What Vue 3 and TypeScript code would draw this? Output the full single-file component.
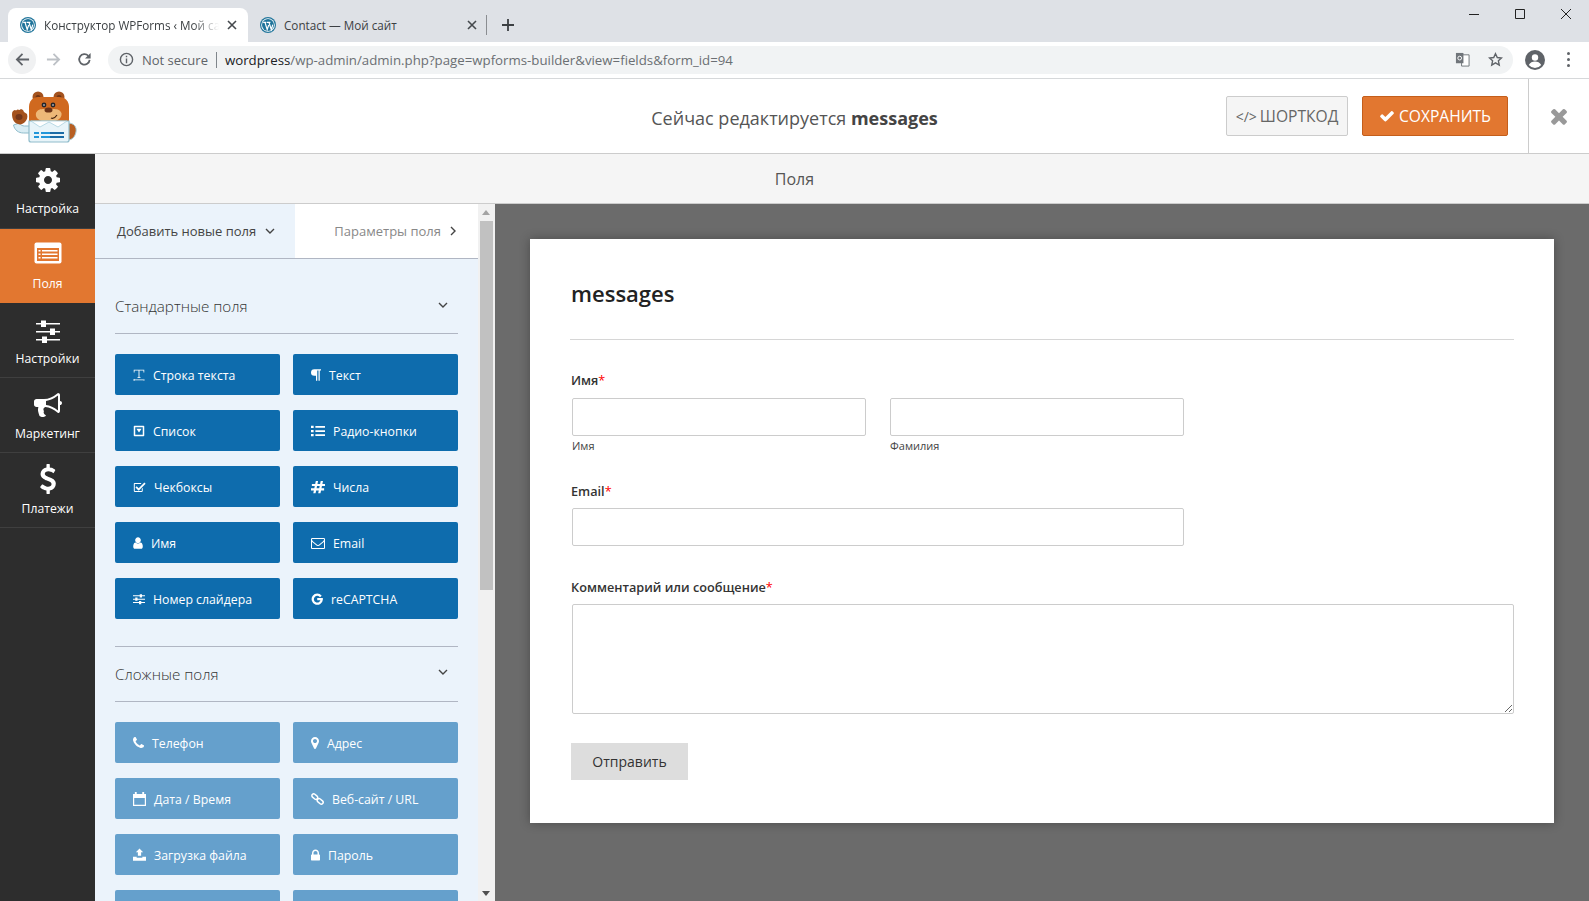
<template>
  <div class="page">
    <!-- browser chrome -->
    <div class="tabstrip">
      <div class="tab active">
        <svg class="favicon" viewBox="0 0 16 16" v-html="icons.wp"></svg>
        <span class="tab-title">Конструктор WPForms ‹ Мой сайт</span>
        <svg class="tab-close" viewBox="0 0 10 10"><path d="M1 1l8 8M9 1l-8 8" /></svg>
      </div>
      <div class="tab">
        <svg class="favicon" viewBox="0 0 16 16" v-html="icons.wp"></svg>
        <span class="tab-title">Contact — Мой сайт</span>
        <svg class="tab-close" viewBox="0 0 10 10"><path d="M1 1l8 8M9 1l-8 8" /></svg>
      </div>
      <div class="tab-sep"></div>
      <svg class="new-tab" viewBox="0 0 12 12"><path d="M6 0v12M0 6h12" /></svg>
      <div class="window-btns">
        <svg viewBox="0 0 12 12"><path d="M1 6.5h10" /></svg>
        <svg viewBox="0 0 12 12"><path d="M1.5 1.5h9v9h-9z" /></svg>
        <svg viewBox="0 0 12 12"><path d="M1 1l10 10M11 1L1 11" /></svg>
      </div>
    </div>
    <div class="toolbar">
      <div class="nav-btn back">
        <svg viewBox="0 0 16 16"><path d="M15 8H2M8 2L2 8l6 6" /></svg>
      </div>
      <div class="nav-btn fwd">
        <svg viewBox="0 0 16 16"><path d="M1 8h13M8 2l6 6-6 6" /></svg>
      </div>
      <div class="nav-btn">
        <svg viewBox="0 0 16 16"><path d="M13.5 8.5A5.6 5.6 0 1 1 12 4" /><path class="solid" d="M14.5 1v6h-6z" /></svg>
      </div>
      <div class="omnibox">
        <svg class="info" viewBox="0 0 16 16">
          <circle cx="8" cy="8" r="6.5" />
          <path d="M8 7v5M8 4v1.6" />
        </svg>
        <span class="not-secure">Not secure</span>
        <span class="omni-sep"></span>
        <span class="url"><b>wordpress</b>/wp-admin/admin.php?page=wpforms-builder&amp;view=fields&amp;form_id=94</span>
        <span class="omni-right">
          <svg class="translate" viewBox="0 0 16 16">
            <path class="t-back" d="M7 3h8v12H7z" />
            <path class="t-front" d="M1 1h8v11H1z" />
            <circle class="t-g" cx="5" cy="6.5" r="2" />
          </svg>
          <svg class="star" viewBox="0 0 16 16"><path d="M8 1.8l1.9 4.1 4.5.5-3.3 3 .9 4.5L8 11.6l-4 2.3.9-4.5-3.3-3 4.5-.5z" /></svg>
        </span>
      </div>
      <svg class="avatar" viewBox="0 0 20 20">
        <circle cx="10" cy="10" r="10" fill="#5f6368" />
        <circle cx="10" cy="7.5" r="3.2" fill="#fff" />
        <path d="M3.8 15c1.3-2.6 3.6-3.6 6.2-3.6s4.9 1 6.2 3.6a8 8 0 0 1-12.4 0z" fill="#fff" />
      </svg>
      <div class="kebab"><i></i><i></i><i></i></div>
    </div>

    <!-- builder top bar -->
    <header class="top">
      <svg class="bear" viewBox="0 78 100 70">
        <!-- tail -->
        <path d="M68 122c6 0 9 4 8 9-1 5-4 8-8 8z" fill="#b85f22" stroke="#a9d0de" stroke-width="1" />
        <!-- sleeve and paw -->
        <path d="M13.500 124c1 5 5 8 10 8h7v-7h-6c-2 0-4-1-5-3z" fill="#d9edf4" stroke="#8fbccb" stroke-width="1" />
        <path d="M12 113c0-3 2-4 3-4l1 .5 1.500-1 2 .5 1.500-1 2 1 1 2 3 2c1 3 0 6-2 8-2 2-5 3-7 2-4-1-6-5-6-10z" fill="#a4521d" />
        <ellipse cx="19" cy="116" rx="3.500" ry="3" fill="#74371a" />
        <!-- ears and head -->
        <circle cx="38" cy="96" r="5.500" fill="#a4521d" />
        <circle cx="59" cy="96" r="5.500" fill="#a4521d" />
        <circle cx="38" cy="96.500" r="2.500" fill="#6f3515" />
        <circle cx="59" cy="96.500" r="2.500" fill="#6f3515" />
        <path d="M29 106c0-6 4-10 9-10h21c6 0 10 4 10 10v18H29z" fill="#d0691f" />
        <path d="M36 112c2-5 7-4 12.500-4s11-1 13 4c1 6-6 9-13 9s-14-3-12.500-9z" fill="#edb878" />
        <ellipse cx="48.500" cy="109" rx="4" ry="2.600" fill="#6b3216" />
        <circle cx="44" cy="104" r="2.400" fill="#22252b" />
        <circle cx="53" cy="104" r="2.400" fill="#22252b" />
        <circle cx="44" cy="104" r="0.800" fill="#fff" />
        <circle cx="53" cy="104" r="0.800" fill="#fff" />
        <path d="M51 117c2 1 4 0 6-3" fill="none" stroke="#43220f" stroke-width="1.200" />
        <!-- shirt -->
        <path d="M29 120h40v19a2 2 0 0 1-2 2H31a2 2 0 0 1-2-2z" fill="#e8f4f9" stroke="#8fbccb" stroke-width="1.200" />
        <path d="M31 120l9 6 9-5 9 5 9-6z" fill="#fff" stroke="#a9d0de" stroke-width="0.800" />
        <path d="M34 131h5v2h-5zM34 135h5v2h-5zM41 131h23v2H41zM41 135h23v2H41z" fill="#2196d9" />
        <path d="M50 131h14v2H50zM50 135h14v2H50z" fill="#1a6ba6" />
      </svg>
      <div class="top-title">Сейчас редактируется <strong>messages</strong></div>
      <div class="top-actions">
        <button class="btn-code"><span class="code-mark">&lt;/&gt;</span> ШОРТКОД</button>
        <button class="btn-save">
          <svg viewBox="0 0 1792 1792" v-html="icons.check"></svg>
          СОХРАНИТЬ
        </button>
      </div>
      <div class="top-close">
        <svg viewBox="0 0 1792 1792" v-html="icons.times"></svg>
      </div>
    </header>

    <div class="body">
      <nav class="side">
        <div
          v-for="item in sideItems"
          :key="item.label + item.icon"
          class="side-item"
          :class="{ active: item.active }"
        >
          <svg :viewBox="item.box" :style="{ width: item.size + 'px', height: item.size + 'px' }" v-html="icons[item.icon]"></svg>
          <span>{{ item.label }}</span>
        </div>
      </nav>

      <div class="main">
        <div class="subhead">Поля</div>
        <div class="workspace">
          <aside class="panel">
            <div class="panel-tabs">
              <div class="ptab current">
                Добавить новые поля
                <svg class="chev" viewBox="0 0 10 6"><path d="M1 1l4 4 4-4" /></svg>
              </div>
              <div class="ptab other">
                Параметры поля
                <svg class="chev" viewBox="0 0 6 10"><path d="M1 1l4 4-4 4" /></svg>
              </div>
            </div>
            <section v-for="group in groups" :key="group.title" class="group" :class="group.cls">
              <div class="group-head">
                <span>{{ group.title }}</span>
                <svg class="chev" viewBox="0 0 10 6"><path d="M1 1l4 4 4-4" /></svg>
              </div>
              <div class="group-grid">
                <div v-for="(field, i) in group.fields" :key="i" class="field-btn">
                  <svg
                    :viewBox="field.box"
                    :style="{ width: field.w + 'px' }"
                    v-html="icons[field.icon]"
                  ></svg>
                  <span>{{ field.label }}</span>
                </div>
              </div>
            </section>
          </aside>
          <div class="scrollbar">
            <span class="arrow up"></span>
            <span class="thumb"></span>
            <span class="arrow down"></span>
          </div>
          <div class="preview">
            <div class="card">
              <h2 class="form-title">messages</h2>
              <div class="form-rule"></div>
              <label class="lbl">Имя<em>*</em></label>
              <div class="name-row">
                <div>
                  <div class="inp"></div>
                  <div class="sub">Имя</div>
                </div>
                <div>
                  <div class="inp"></div>
                  <div class="sub">Фамилия</div>
                </div>
              </div>
              <label class="lbl email-lbl">Email<em>*</em></label>
              <div class="inp email"></div>
              <label class="lbl msg-lbl">Комментарий или сообщение<em>*</em></label>
              <div class="inp area">
                <svg class="grip" viewBox="0 0 10 10"><path d="M9 2L2 9M9 6L6 9" /></svg>
              </div>
              <button class="send">Отправить</button>
            </div>
          </div>
        </div>
      </div>
    </div>
  </div>
</template>

<script setup lang="ts">
interface FieldBtn {
  label: string
  icon: string
  w: number
  box: string
}

const FA = '0 0 1792 1792'
const SM = '0 0 16 16'

const icons: Record<string, string> = {
  wp: '<circle cx="8" cy="8" r="8" fill="#21759b"/><circle cx="8" cy="8" r="6.800" fill="#fff"/><circle cx="8" cy="8" r="6" fill="#21759b"/><path d="M3.200 5.400h3.200M5 5.400l2.200 7.200 1.500-4.600M7 5.400h3.400M9 5.400l2.300 7.200 1.500-5" fill="none" stroke="#fff" stroke-width="1.200"/>',
  check: '<path d="M1671 566q0 40-28 68l-724 724-136 136q-28 28-68 28t-68-28l-136-136-362-362q-28-28-28-68t28-68l136-136q28-28 68-28t68 28l294 295 656-657q28-28 68-28t68 28l136 136q28 28 28 68z"/>',
  times: '<path d="M1490 1322q0 40-28 68l-136 136q-28 28-68 28t-68-28l-294-294-294 294q-28 28-68 28t-68-28l-136-136q-28-28-28-68t28-68l294-294-294-294q-28-28-28-68t28-68l136-136q28-28 68-28t68 28l294 294 294-294q28-28 68-28t68 28l136 136q28 28 28 68t-28 68l-294 294 294 294q28 28 28 68z"/>',
  cog: '<path d="M1152 896q0-106-75-181t-181-75-181 75-75 181 75 181 181 75 181-75 75-181zm512-109v222q0 12-8 23t-20 13l-185 28q-19 54-39 91 35 50 107 138 10 12 10 25t-9 23q-27 37-99 108t-94 71q-12 0-26-9l-138-108q-44 23-91 38-16 136-29 186-7 28-36 28h-222q-14 0-24.500-8.500t-11.500-21.500l-28-184q-49-16-90-37l-141 107q-10 9-25 9-14 0-25-11-126-114-165-168-7-10-7-23 0-12 8-23 15-21 51-66.500t54-70.500q-27-50-41-99l-183-27q-13-2-21-12.500t-8-23.500v-222q0-12 8-23t19-13l186-28q14-46 39-92-40-57-107-138-10-12-10-24 0-10 9-23 26-36 98.500-107.500t94.500-71.500q13 0 26 10l138 107q44-23 91-38 16-136 29-186 7-28 36-28h222q14 0 24.500 8.500t11.500 21.500l28 184q49 16 90 37l142-107q9-9 24-9 13 0 25 10 129 119 165 170 7 8 7 22 0 12-8 23-15 21-51 66.500t-54 70.500q26 50 41 98l183 28q13 2 21 12.500t8 23.500z"/>',
  form: '<rect x="0.500" y="0.500" width="27" height="21" rx="2"/><rect x="3" y="6" width="22" height="13" fill="var(--ico-bg)"/><path d="M4.500 8h2v1.500h-2zM8 8h15.500v1.500H8zM4.500 11.500h2V13h-2zM8 11.500h15.500V13H8zM4.500 15h2v1.500h-2zM8 15h15.500v1.500H8z"/>',
  sliders: '<path d="M0 2.500h24v1.600H0zM0 10.500h24v1.600H0zM0 18.500h24v1.600H0z"/><path d="M5 0h5v6.500H5zM14 8h5v6.500h-5zM6 16h5v6.500H6z"/>',
  bullhorn: '<path d="M1664 640q53 0 90.500 37.500t37.500 90.500-37.500 90.500-90.500 37.500v384q0 52-38 90t-90 38q-417-347-812-380-58 19-91 66t-31 100.500 40 92.500q-20 33-23 65.500t6 58 33.500 55 48 50 61.500 50.500q-29 58-111.500 83t-168.500 11.500-132-55.500q-7-23-29.500-87.500t-32-94.500-23-89-15-101 3.500-98.500 22-110.500h-122q-66 0-113-47t-47-113v-192q0-66 47-113t113-47h480q435 0 896-384 52 0 90 38t38 90v384zm-128 604v-954q-394 302-768 343v270q377 42 768 341z"/>',
  usd: '<path d="M1362 1185q0 153-99.500 263.500t-258.500 136.500v175q0 14-9 23t-23 9h-135q-13 0-22.500-9.500t-9.500-22.500v-175q-66-9-127.500-31t-101.500-44.500-74-48-46.500-37.500-17.500-18q-17-21-2-41l103-135q7-10 23-12 15-2 24 9l2 2q113 99 243 125 37 8 74 8 81 0 142.500-43t61.500-122q0-28-15-53t-33.500-42-58.500-37.500-66-32-80-32.500q-39-16-61.500-25t-61.500-26.500-62.500-31-56.500-35.500-53.500-42.500-43.500-49-35.500-58-21-66.500-8.500-78q0-138 98-242t255-134v-180q0-13 9.500-22.500t22.500-9.500h135q14 0 23 9t9 23v176q57 6 110.500 23t87 33.500 63.500 37.500 39 29 15 14q17 18 5 38l-81 146q-8 15-23 16-14 3-27-7-3-3-14.500-12t-39-26.500-58.500-32-74.500-26-85.500-11.500q-95 0-155 43t-60 111q0 26 8.500 48t29.500 41.500 39.500 33 56 31 60.500 27 70 27.500q53 20 81 31.500t76 35 75.500 42.500 62 50 53 63.500 31.500 76.500 13 94z"/>',
  textline: '<path d="M1 1h14v3.500h-1V2H8.600v9H10v1H6v-1h1.400V2H2v2.500H1zM1 14h14v1H1zM0 14.500L2 13v3zM16 14.500L14 13v3z"/>',
  para: '<path d="M7 1h8v1.500h-1.500V15H12V2.500h-1.500V15H9V9H7a4 4 0 0 1 0-8z"/>',
  select: '<path fill-rule="evenodd" d="M2 1h12a1 1 0 0 1 1 1v12a1 1 0 0 1-1 1H2a1 1 0 0 1-1-1V2a1 1 0 0 1 1-1zm1 2v10h10V3zm1.500 2h7L8 10z"/>',
  checkbox: '<path d="M12 8.800V13a1 1 0 0 1-1 1H2a1 1 0 0 1-1-1V4a1 1 0 0 1 1-1h8v1.200H2.200v8.600h8.600V10z"/><path d="M4.500 7L7 9.500 14 2.500l1.500 1.500L7 12.500 3 8.500z"/>',
  list: '<path d="M0 2h3v2.500H0zM0 6.800h3v2.500H0zM0 11.500h3V14H0zM5 2.300h11v2H5zM5 7h11v2H5zM5 11.800h11v2H5z"/>',
  hash: '<path d="M5.500 1h2.600L7.400 4.500h3L11.100 1h2.600L13 4.500h3v2.400h-3.500l-.5 2.600h3v2.400h-3.500L10.800 15H8.200l.7-3.100h-3L5.200 15H2.600l.7-3.100H0V9.500h3.800l.5-2.600H1V4.500h3.800zM6.900 6.900l-.5 2.600h3l.5-2.600z"/>',
  user: '<path d="M1536 1399q0 109-62.500 187t-150.500 78h-854q-88 0-150.500-78t-62.500-187q0-85 8.500-160.500t31.500-152 58.500-131 94-89 134.500-34.500q131 128 313 128t313-128q76 0 134.500 34.500t94 89 58.500 131 31.500 152 8.500 160.500zm-256-887q0 159-112.500 271.500t-271.500 112.500-271.500-112.500-112.500-271.500 112.500-271.500 271.500-112.500 271.500 112.500 112.500 271.500z"/>',
  mail: '<path d="M1664 1504v-768q-32 36-69 66-268 206-426 338-51 43-83 67t-86.500 48.500-102.500 24.500h-2q-48 0-102.500-24.500t-86.500-48.500-83-67q-158-132-426-338-37-30-69-66v768q0 13 9.500 22.500t22.500 9.500h1472q13 0 22.500-9.500t9.500-22.500zm0-1051v-24.500l-.5-13-3-12.500-5.500-9-9-7.500-14-2.500h-1472q-13 0-22.500 9.500t-9.500 22.500q0 168 147 284 193 152 401 317 6 5 35 29.500t46 37.500 44.500 31.500 50.500 27.500 43 9h2q20 0 43-9t50.500-27.500 44.500-31.500 46-37.500 35-29.500q208-165 401-317 54-43 100.500-115.500t46.500-131.500zm128-37v1088q0 66-47 113t-113 47h-1472q-66 0-113-47t-47-113v-1088q0-66 47-113t113-47h1472q66 0 113 47t47 113z"/>',
  tune: '<path d="M0 3h16v1.400H0zM0 7.500h16v1.400H0zM0 12h16v1.400H0z"/><path d="M9 1.500h3v4.400H9zM3 6h3v4.400H3zM8 10.500h3v4.400H8z"/>',
  google: '<path d="M14.300 3.700A7.500 7.500 0 1 0 15.800 8.900V6.800H8.300v3h4.300A4.500 4.500 0 1 1 12 5.600z"/>',
  phone: '<path d="M1600 1240q0 27-10 70.500t-21 68.500q-21 50-122 106-94 51-186 51-27 0-53-3.500t-57.500-12.500-47-14.500-55.500-20.500-49-18q-98-35-175-83-127-79-264-216t-216-264q-48-77-83-175-3-9-18-49t-20.500-55.500-14.500-47-12.500-57.500-3.500-53q0-92 51-186 56-101 106-122 25-11 68.500-21t70.500-10q14 0 21 3 18 6 53 76 11 19 30 54t35 63.500 31 53.500q3 4 17.500 25t21.500 35.500 7 28.500q0 20-28.500 50t-62 55-62 53-28.500 46q0 9 5 22.500t8.500 20.500 14 24 11.500 19q76 137 174 235t235 174q2 1 19 11.500t24 14 20.500 8.500 22.500 5q18 0 46-28.500t53-62 55-62 50-28.500q14 0 28.500 7t35.500 21.500 25 17.500q25 15 53.500 31t63.500 35 54 30q70 35 76 53 3 7 3 21z"/>',
  marker: '<path d="M1152 640q0-106-75-181t-181-75-181 75-75 181 75 181 181 75 181-75 75-181zm256 0q0 109-33 179l-364 774q-16 33-47.500 52t-67.500 19-67.500-19-46.500-52l-365-774q-33-70-33-179 0-212 150-362t362-150 362 150 150 362z"/>',
  calendar: '<path fill-rule="evenodd" d="M1 3h2V1h2v2h6V1h2v2h2v13H1zm1.300 4.500v7.200h11.400V7.500z"/>',
  link: '<g fill="none" stroke="#fff" stroke-width="1.800"><rect x="0.800" y="3" width="8" height="4.500" rx="2.200" transform="rotate(40 5 5)"/><rect x="7.200" y="8.500" width="8" height="4.500" rx="2.200" transform="rotate(40 11 11)"/></g>',
  upload: '<path d="M8 0l4.500 4.500H10V9H6V4.500H3.500zM0 10h4.500v1.500h7V10H16v5H0z"/>',
  lock: '<path d="M640 768h512v-192q0-106-75-181t-181-75-181 75-75 181v192zm832 96v576q0 40-28 68t-68 28h-960q-40 0-68-28t-28-68v-576q0-40 28-68t68-28h32v-192q0-184 132-316t316-132 316 132 132 316v192h32q40 0 68 28t28 68z"/>',
  blank: ''
}

const sideItems = [
  { label: 'Настройка', icon: 'cog', box: FA, size: 28, active: false },
  { label: 'Поля', icon: 'form', box: '0 0 28 22', size: 28, active: true },
  { label: 'Настройки', icon: 'sliders', box: '0 0 24 23', size: 24, active: false },
  { label: 'Маркетинг', icon: 'bullhorn', box: FA, size: 28, active: false },
  { label: 'Платежи', icon: 'usd', box: FA, size: 30, active: false }
]

const fld = (label: string, icon: string, w: number, box: string = SM): FieldBtn => ({ label, icon, w, box })

const groups = [
  {
    title: 'Стандартные поля',
    cls: 'first',
    fields: [
      fld('Строка текста', 'textline', 12),
      fld('Текст', 'para', 10, '3 1 12 14'),
      fld('Список', 'select', 12),
      fld('Радио-кнопки', 'list', 14),
      fld('Чекбоксы', 'checkbox', 13),
      fld('Числа', 'hash', 14),
      fld('Имя', 'user', 10, '224 220 1344 1344'),
      fld('Email', 'mail', 14, FA),
      fld('Номер слайдера', 'tune', 12),
      fld('reCAPTCHA', 'google', 12)
    ]
  },
  {
    title: 'Сложные поля',
    cls: 'second',
    fields: [
      fld('Телефон', 'phone', 11, '192 192 1408 1408'),
      fld('Адрес', 'marker', 8, '384 128 1024 1536'),
      fld('Дата / Время', 'calendar', 13, '1 1 14 15'),
      fld('Веб-сайт / URL', 'link', 13),
      fld('Загрузка файла', 'upload', 13),
      fld('Пароль', 'lock', 9, '320 128 1152 1408'),
      // the last row runs off the bottom of the window
      fld('', 'blank', 13),
      fld('', 'blank', 13)
    ]
  }
]
</script>

<style>
html,
body {
  margin: 0;
  height: 100%;
  overflow: hidden;
}
</style>

<style scoped>
.page {
  width: 1589px;
  height: 901px;
  display: flex;
  flex-direction: column;
  overflow: hidden;
  background: #fff;
  font-family: "Open Sans", "Noto Sans", sans-serif;
  color: #444;
}

/* browser chrome */
.tabstrip {
  height: 42px;
  flex: none;
  background: #dee1e6;
  display: flex;
  align-items: flex-end;
  padding-left: 8px;
  box-sizing: border-box;
}
.tab {
  width: 240px;
  height: 34px;
  display: flex;
  align-items: center;
  padding: 0 11px 0 12px;
  box-sizing: border-box;
  font-size: 11.7px;
  color: #3c4043;
  border-radius: 8px 8px 0 0;
}
.tab.active {
  background: #fff;
}
.favicon {
  width: 16px;
  height: 16px;
  flex: none;
  margin-right: 8px;
}
.tab-title {
  flex: 1;
  white-space: nowrap;
  overflow: hidden;
  min-width: 0;
}
.tab.active .tab-title {
  -webkit-mask-image: linear-gradient(90deg, #000 85%, transparent);
  mask-image: linear-gradient(90deg, #000 85%, transparent);
}
.tab-close {
  width: 10px;
  height: 10px;
  flex: none;
  margin-left: 8px;
  fill: none;
  stroke: #45494d;
  stroke-width: 1.6;
}
.tab-sep {
  width: 1px;
  height: 20px;
  background: #8a8d91;
  margin: 0 0 7px -2px;
}
.new-tab {
  width: 12px;
  height: 12px;
  margin: 0 0 11px 15px;
  fill: none;
  stroke: #3c4043;
  stroke-width: 1.8;
}
.window-btns {
  margin-left: auto;
  align-self: flex-start;
  display: flex;
  gap: 34px;
  padding: 8px 17px 0 0;
}
.window-btns svg {
  width: 12px;
  height: 12px;
  fill: none;
  stroke: #222;
  stroke-width: 1;
}
.toolbar {
  height: 37px;
  flex: none;
  box-sizing: border-box;
  border-bottom: 1px solid #d6d8da;
  display: flex;
  align-items: center;
  padding: 0 0 1px 8px;
}
.nav-btn {
  width: 28px;
  height: 28px;
  border-radius: 50%;
  display: flex;
  align-items: center;
  justify-content: center;
  margin-right: 3px;
}
.nav-btn.back {
  background: #f0f1f2;
}
.nav-btn svg {
  width: 15px;
  height: 15px;
  fill: none;
  stroke: #5f6368;
  stroke-width: 1.9;
}
.nav-btn .solid {
  fill: #5f6368;
  stroke: none;
}
.nav-btn.fwd svg {
  stroke: #bdc1c6;
}
.omnibox {
  width: 1405px;
  height: 28px;
  margin-left: 7px;
  border-radius: 14px;
  background: #f1f3f4;
  display: flex;
  align-items: center;
  padding-left: 11px;
  box-sizing: border-box;
  font-size: 13px;
  white-space: nowrap;
}
.info {
  width: 15px;
  height: 15px;
  fill: none;
  stroke: #5f6368;
  stroke-width: 1.5;
  margin-right: 8px;
}
.not-secure {
  color: #5f6368;
}
.omni-sep {
  width: 1px;
  height: 16px;
  background: #80868b;
  margin: 0 8px 0 8px;
}
.url {
  color: #6b6f73;
  font-size: 13.26px;
}
.url b {
  font-weight: 400;
  color: #202124;
}
.omni-right {
  margin-left: auto;
  display: flex;
  align-items: center;
  gap: 18px;
  padding-right: 10px;
}
.translate {
  width: 15px;
  height: 15px;
}
.t-back {
  fill: #fff;
  stroke: #70757a;
}
.t-front {
  fill: #70757a;
}
.t-g {
  fill: none;
  stroke: #fff;
}
.star {
  width: 15px;
  height: 15px;
  fill: none;
  stroke: #5f6368;
  stroke-width: 1.5;
}
.avatar {
  width: 20px;
  height: 20px;
  margin-left: 12px;
}
.kebab {
  display: flex;
  flex-direction: column;
  gap: 3px;
  margin-left: 22px;
}
.kebab i {
  width: 3px;
  height: 3px;
  border-radius: 50%;
  background: #5f6368;
}

/* builder top bar */
.top {
  height: 75px;
  flex: none;
  box-sizing: border-box;
  border-bottom: 1px solid #ccc;
  display: flex;
  align-items: stretch;
  position: relative;
  background: #fff;
}
.bear {
  width: 100px;
  height: 70px;
  flex: none;
}
.top-title {
  position: absolute;
  left: 0;
  right: 0;
  top: 26px;
  text-align: center;
  font-size: 18px;
  line-height: 26px;
  color: #555;
}
.top-title strong {
  font-weight: 700;
  color: #444;
}
.top-actions {
  margin-left: auto;
  display: flex;
  align-items: center;
  gap: 14px;
  padding-right: 20px;
  position: relative;
}
.top-actions button {
  height: 40px;
  border-radius: 2px;
  font-family: inherit;
  font-size: 15.6px;
  display: flex;
  align-items: center;
  justify-content: center;
  padding: 0;
  box-sizing: border-box;
}
.btn-code {
  width: 122px;
  background: #f5f5f5;
  border: 1px solid #ccc;
  color: #666;
  gap: 3px;
}
.code-mark {
  font-size: 14px;
}
.btn-save {
  width: 146px;
  background: #e27730;
  border: 1px solid #c45e1b;
  color: #fff;
  gap: 4px;
}
.btn-save svg {
  width: 16px;
  height: 16px;
  fill: #fff;
}
.top-close {
  width: 60px;
  flex: none;
  border-left: 1px solid #ccc;
  display: flex;
  align-items: center;
  justify-content: center;
}
.top-close svg {
  width: 24px;
  height: 24px;
  fill: #999;
}

.body {
  flex: 1;
  min-height: 0;
  display: flex;
}
.side {
  width: 95px;
  flex: none;
  background: #2d2d2d;
}
.side-item {
  --ico-bg: #2d2d2d;
  height: 75px;
  box-sizing: border-box;
  border-bottom: 1px solid #3f3f3f;
  display: flex;
  flex-direction: column;
  align-items: center;
  justify-content: flex-end;
  gap: 6px;
  padding-bottom: 11px;
  color: #fff;
  font-size: 12.2px;
}
.side-item:nth-child(n + 3) {
  padding-bottom: 10px;
}
.side-item svg {
  fill: #fff;
  display: block;
}
.side-item.active {
  --ico-bg: #e27730;
  height: 74px;
  background: #e27730;
  border-bottom: 0;
}
.side-item.active svg {
  margin-bottom: 2px;
}
.main {
  flex: 1;
  min-width: 0;
  display: flex;
  flex-direction: column;
}
.subhead {
  height: 50px;
  flex: none;
  box-sizing: border-box;
  background: #f5f5f5;
  border-bottom: 1px solid #ccc;
  text-align: center;
  font-size: 16px;
  line-height: 50px;
  padding-right: 95px;
  color: #555;
}
.workspace {
  flex: 1;
  min-height: 0;
  display: flex;
}
.panel {
  width: 383px;
  flex: none;
  background: #ebf3fb;
  overflow: hidden;
}
.panel-tabs {
  height: 55px;
  box-sizing: border-box;
  display: flex;
  border-bottom: 1px solid #b0b6c3;
}
.ptab {
  display: flex;
  align-items: center;
  font-size: 13px;
  white-space: nowrap;
}
.ptab .chev {
  margin-left: 9px;
}
.ptab.current {
  width: 200px;
  padding-left: 22px;
  box-sizing: border-box;
  color: #444;
}
.ptab.other {
  flex: 1;
  background: #fff;
  color: #888;
  justify-content: flex-end;
  padding-right: 22px;
}
.ptab.other .chev {
  width: 6px;
  height: 10px;
}
.chev {
  width: 10px;
  height: 6px;
  fill: none;
  stroke: #444;
  stroke-width: 1.4;
  flex: none;
}
.group {
  margin: 0 20px;
  width: 343px;
}
.group-head {
  display: flex;
  justify-content: space-between;
  align-items: center;
  height: 54px;
  box-sizing: border-box;
  border-bottom: 1px solid #b0b6c3;
  font-size: 15.2px;
  font-weight: 300;
  color: #333;
  padding: 0 10px 1px 0;
}
.group-head .chev {
  margin-top: -3px;
}
.group.first {
  padding-top: 21px;
}
.group.second {
  margin-top: 27px;
  border-top: 1px solid #b0b6c3;
}
.group.second .group-head {
  height: 55px;
}
.group-grid {
  display: grid;
  grid-template-columns: 165px 165px;
  grid-auto-rows: 41px;
  column-gap: 13px;
  row-gap: 15px;
  padding-top: 20px;
}
.field-btn {
  background: #0e6cad;
  border-radius: 2px;
  display: flex;
  align-items: center;
  padding-left: 18px;
  gap: 8px;
  color: #fff;
  font-size: 12.3px;
  white-space: nowrap;
}
.field-btn span {
  padding-top: 2px;
}
.field-btn svg {
  height: 14px;
  flex: none;
  fill: #fff;
}
.second .field-btn {
  background: #65a0cc;
}
.scrollbar {
  width: 17px;
  flex: none;
  background: #f1f1f1;
  position: relative;
}
.thumb {
  position: absolute;
  left: 2px;
  right: 2px;
  top: 17px;
  height: 369px;
  background: #c1c1c1;
}
.arrow {
  position: absolute;
  left: 4px;
  border: 4px solid transparent;
}
.arrow.up {
  top: 2px;
  border-bottom: 5px solid #a3a3a3;
}
.arrow.down {
  bottom: 1px;
  border-top: 5px solid #505050;
}
.preview {
  flex: 1;
  min-width: 0;
  background: #6b6b6b;
  padding: 35px 35px 0;
  overflow: hidden;
}
.card {
  width: 1024px;
  height: 584px;
  box-sizing: border-box;
  background: #fff;
  box-shadow: 0 0 10px rgba(0, 0, 0, 0.3);
  padding: 0 40px 0 42px;
  color: #333;
}
.form-title {
  margin: 0 0 0 -1px;
  padding-top: 38px;
  font-size: 22px;
  line-height: 32px;
  font-weight: 600;
  color: #222;
}
.form-rule {
  height: 1px;
  background: #d6d6d6;
  margin: 30px 0 31px -2px;
  width: 944px;
}
.lbl {
  display: block;
  margin-left: -1px;
  font-size: 12.7px;
  line-height: 18px;
  font-weight: 600;
  color: #333;
}
.lbl em {
  color: #f00;
  font-style: normal;
  font-weight: 400;
}
.name-row {
  display: flex;
  gap: 24px;
  margin-top: 9px;
}
.name-row > div {
  width: 294px;
  height: 56px;
}
.inp {
  height: 38px;
  box-sizing: border-box;
  border: 1px solid #ccc;
  border-radius: 2px;
  background: #fff;
}
.sub {
  font-size: 11px;
  line-height: 15px;
  margin-top: 2px;
  color: #444;
}
.email-lbl {
  margin-top: 28px;
}
.inp.email {
  width: 612px;
  margin-top: 8px;
}
.msg-lbl {
  margin-top: 32px;
}
.inp.area {
  width: 942px;
  height: 110px;
  margin-top: 8px;
  position: relative;
}
.grip {
  position: absolute;
  right: 0;
  bottom: 0;
  width: 10px;
  height: 10px;
  fill: none;
  stroke: #666;
}
.send {
  display: block;
  width: 117px;
  height: 37px;
  margin: 29px 0 0 -1px;
  background: #ddd;
  border: 0;
  font-family: inherit;
  font-size: 14px;
  color: #333;
  padding: 0;
}
</style>
